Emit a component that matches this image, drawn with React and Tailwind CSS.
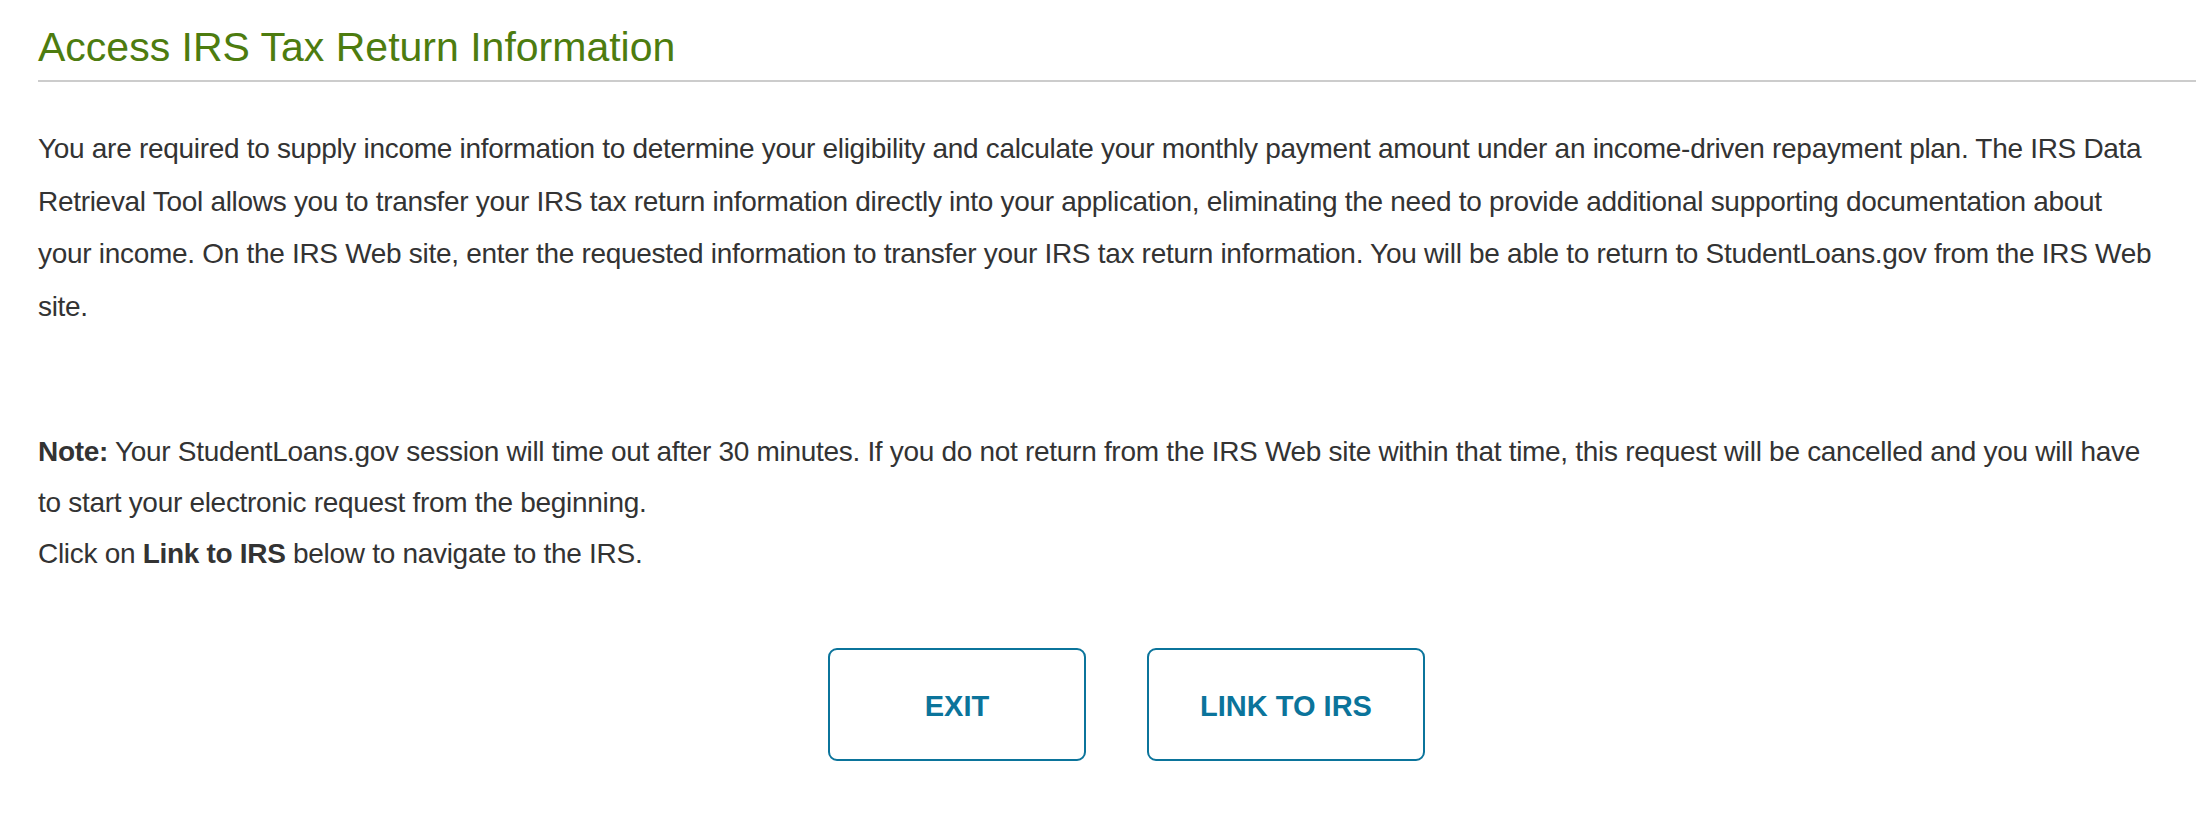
import React from 'react';

const font = { fontFamily: '"Liberation Sans", Arial, sans-serif' };

const Line = ({ children }) => <span className="block whitespace-nowrap">{children}</span>;

export default function App() {
  return (
    <div className="bg-white w-full min-h-[814px] pl-[38px] pr-[16px]" style={font}>
      <h1 className="pt-[19px] pb-[5px] border-b-2 border-[#cccccc] text-[41px] leading-[56px] font-normal text-[#4d7c0f]">
        Access IRS Tax Return Information
      </h1>

      <p className="mt-[41px] text-[28px] tracking-[-0.3px] leading-[52.5px] text-[#333333]">
        <Line>You are required to supply income information to determine your eligibility and calculate your monthly payment amount under an income-driven repayment plan. The IRS Data</Line>
        <Line>Retrieval Tool allows you to transfer your IRS tax return information directly into your application, eliminating the need to provide additional supporting documentation about</Line>
        <Line>your income. On the IRS Web site, enter the requested information to transfer your IRS tax return information. You will be able to return to StudentLoans.gov from the IRS Web</Line>
        <Line>site.</Line>
      </p>

      <p className="mt-[93px] text-[28px] tracking-[-0.3px] leading-[51px] text-[#333333]">
        <Line><b className="font-bold">Note:</b> Your StudentLoans.gov session will time out after 30 minutes. If you do not return from the IRS Web site within that time, this request will be cancelled and you will have</Line>
        <Line>to start your electronic request from the beginning.</Line>
        <Line>Click on <b className="font-bold">Link to IRS</b> below to navigate to the IRS.</Line>
      </p>

      <div className="mt-[69px] flex justify-center gap-[61px] pl-[19px]">
        <button className="w-[258px] h-[113px] pt-[5px] border-2 border-[#0b749b] rounded-[9px] bg-white text-[#0b749b] text-[29px] font-bold">
          EXIT
        </button>
        <button className="w-[278px] h-[113px] pt-[5px] border-2 border-[#0b749b] rounded-[9px] bg-white text-[#0b749b] text-[29px] font-bold">
          LINK TO IRS
        </button>
      </div>
    </div>
  );
}
